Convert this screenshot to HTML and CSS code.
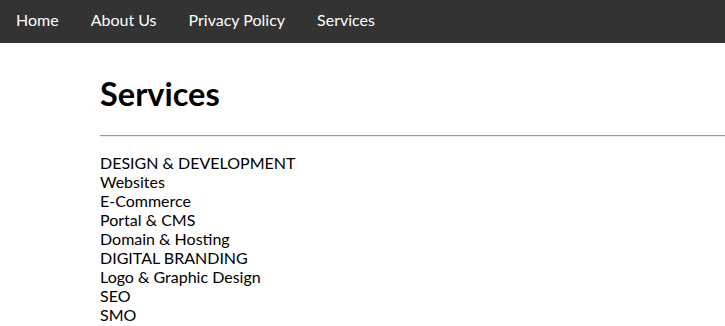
FILE: index.html
```html
<!DOCTYPE html>
<html>
<head>
<meta charset="utf-8">
<link rel="stylesheet" href="styles.css">
</head>
<body>
<nav class="topnav">
  <a href="#">Home</a>
  <a href="#">About Us</a>
  <a href="#">Privacy Policy</a>
  <a href="#">Services</a>
</nav>
<main class="content">
  <h1 class="title">Services</h1>
  <hr class="rule">
  <div class="list">
    <div>DESIGN &amp; DEVELOPMENT</div>
    <div>Websites</div>
    <div>E-Commerce</div>
    <div>Portal &amp; CMS</div>
    <div>Domain &amp; Hosting</div>
    <div>DIGITAL BRANDING</div>
    <div>Logo &amp; Graphic Design</div>
    <div>SEO</div>
    <div>SMO</div>
  </div>
</main>
</body>
</html>
```

FILE: styles.css
```css
html, body {
  margin: 0;
  padding: 0;
  background: #fff;
  font-family: Lato, "Open Sans", sans-serif;
  color: #000;
}
.topnav {
  display: flex;
  background: #333;
  height: 43px;
  align-items: flex-start;
}
.topnav a {
  color: #fff;
  text-decoration: none;
  font-size: 16px;
  padding: 0 16px 4px;
  line-height: 39px;
}
.content {
  margin-left: 100px;
}
.title {
  font-size: 32.5px;
  font-weight: 700;
  margin: 32px 0 0;
  line-height: 38px;
}
.rule {
  height: 0;
  border: 0;
  border-top: 1px solid #9a9a9a;
  border-bottom: 1px solid #eeeeee;
  margin: 22px 0 0;
}
.list {
  margin-top: 16px;
  font-size: 16px;
  line-height: 19px;
}
```
